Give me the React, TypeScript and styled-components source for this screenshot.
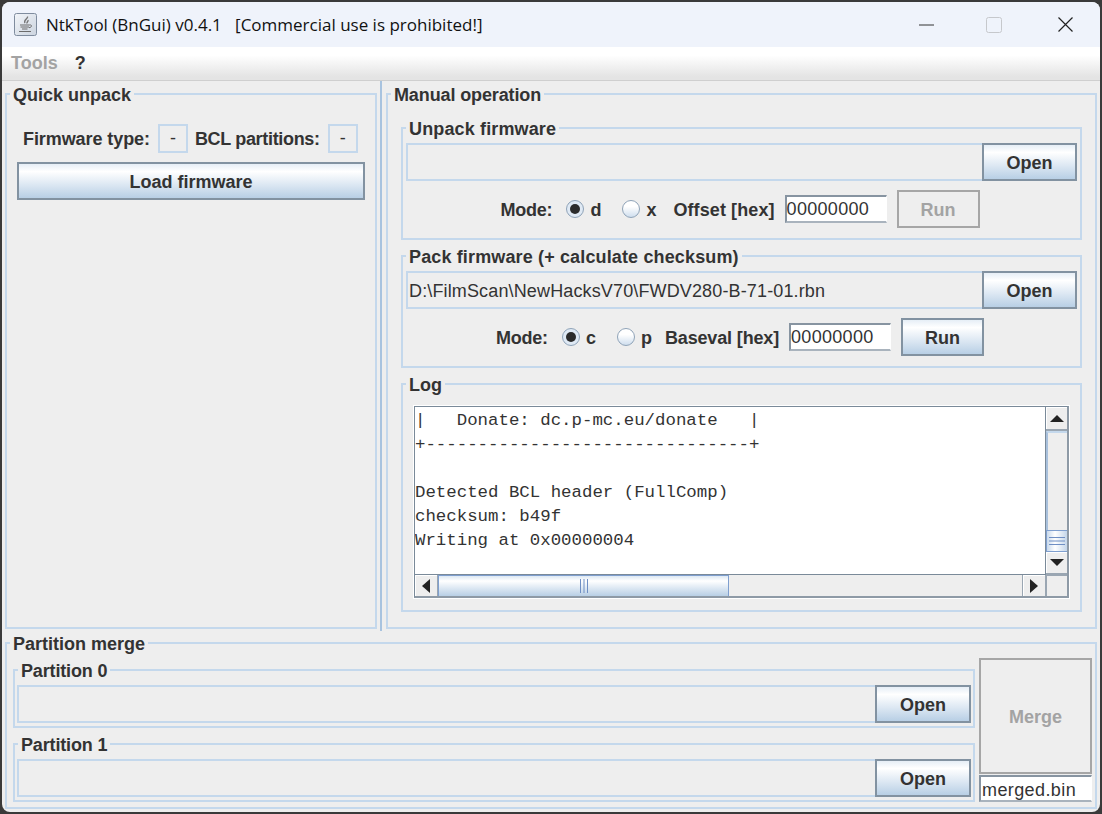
import React from 'react';
import styled, { createGlobalStyle } from 'styled-components';

const GlobalStyle = createGlobalStyle`
  html, body {
    margin: 0;
    height: 100%;
    background: #3a3a3a;
  }
  body {
    font-family: "Liberation Sans", Arial, sans-serif;
    overflow: hidden;
  }
  * {
    box-sizing: border-box;
  }
`;

const Window = styled.div`
  width: 1098px;
  height: 810px;
  margin: 2px;
  border-radius: 8px;
  overflow: hidden;
  background: #eeeeee;
  color: #333333;
  font-size: 18px;
`;

const TitleBar = styled.div`
  display: flex;
  align-items: center;
  height: 45px;
  padding-left: 12px;
  background: #eff3fb;
`;

const TitleText = styled.div`
  margin-left: 9px;
  font-family: "Open Sans", sans-serif;
  font-size: 17px;
  color: #111111;
  white-space: pre;
  flex: 1;
`;

const WindowControl = styled.div<{ $width: number }>`
  display: flex;
  align-items: center;
  justify-content: center;
  width: ${({ $width }) => $width}px;
  height: 45px;
`;

const MenuBar = styled.div`
  display: flex;
  align-items: center;
  height: 34px;
  padding: 0 0 1px 9px;
  gap: 17px;
  font-weight: 700;
  background: linear-gradient(#ffffff 0%, #ffffff 25%, #e4e4e4 90%);
  border-bottom: 1px solid #cfcfcf;
`;

const MenuItem = styled.span<{ $disabled?: boolean }>`
  color: ${({ $disabled }) => ($disabled ? '#a3a3a3' : '#333333')};
`;

const Body = styled.div`
  display: flex;
  height: 550px;
`;

const Group = styled.fieldset`
  display: flex;
  flex-direction: column;
  min-width: 0;
  margin: 0;
  padding: 0;
  border: 2px solid #c4d8ec;
`;

/* $inset is the left padding of the group, the legend starts from it */
const GroupTitle = styled.legend<{ $inset: number; $spacing?: number }>`
  margin-left: ${({ $inset }) => 3 - $inset}px;
  padding: 0 3px;
  height: 20px;
  line-height: 22px;
  font-weight: 700;
  letter-spacing: ${({ $spacing }) => $spacing ?? 0}px;
  white-space: nowrap;
`;

const QuickGroup = styled(Group)`
  width: 372px;
  height: 545px;
  margin: 3px 0 0 3px;
  padding: 20px 10px 0;
`;

const Divider = styled.div`
  width: 2px;
  margin: 0 4px 0 3px;
  background: #a8c3df;
`;

const ManualGroup = styled(Group)`
  width: 711px;
  height: 545px;
  margin-top: 3px;
  padding: 14px 13px 0;
  gap: 6px;
`;

const InnerGroup = styled(Group)<{ $height: number }>`
  height: ${({ $height }) => $height}px;
  flex: none;
  padding: 5px 3px 0;
`;

const Label = styled.span<{ $spacing?: number }>`
  padding-top: 2px;
  letter-spacing: ${({ $spacing }) => $spacing ?? 0}px;
  white-space: nowrap;
`;

const ModeLabel = styled(Label)`
  margin-right: 4px;
  letter-spacing: -0.2px;
`;

const InfoRow = styled.div`
  display: flex;
  align-items: center;
  height: 29px;
  padding-left: 6px;
  font-weight: 700;
`;

const InfoValue = styled.div`
  display: flex;
  flex: none;
  align-items: center;
  justify-content: center;
  width: 30px;
  height: 29px;
  margin: 0 7px 0 8px;
  border: 2px solid #c4d8ec;
  font-weight: 400;
`;

const Button = styled.button<{ $width?: number; $height?: number }>`
  flex: none;
  width: ${({ $width }) => ($width ? `${$width}px` : '100%')};
  height: ${({ $height }) => $height ?? 38}px;
  padding: 2px 0 0;
  border: 2px solid #8292a1;
  border-radius: 0;
  background: linear-gradient(#e6eef6 0%, #ffffff 22%, #dde8f3 60%, #b8cfe5 100%);
  font: 700 18px "Liberation Sans", Arial, sans-serif;
  color: #333333;

  &:disabled {
    background: #eeeeee;
    border-color: #a6a6a6;
    color: #a3a3a3;
  }
`;

const LoadButton = styled(Button)`
  margin-top: 9px;
`;

const FileRow = styled.div`
  display: flex;
  flex: none;
  height: 38px;
`;

const FileField = styled.div`
  flex: 1;
  min-width: 0;
  padding-left: 1px;
  border: 2px solid #c4d8ec;
  border-right: 0;
  line-height: 36px;
  letter-spacing: 0.14px;
  white-space: nowrap;
`;

const ModeRow = styled.div`
  display: flex;
  align-items: center;
  justify-content: center;
  gap: 10px;
  height: 38px;
  margin-top: 9px;
  padding-right: 3px;
  font-weight: 700;
`;

const RadioGroup = styled.div<{ $after: number }>`
  display: flex;
  gap: 21px;
  margin-right: ${({ $after }) => $after}px;
`;

const RadioOption = styled.label`
  display: flex;
  align-items: center;
  gap: 6px;
`;

const RadioDot = styled.span<{ $checked?: boolean }>`
  display: flex;
  align-items: center;
  justify-content: center;
  width: 18px;
  height: 18px;
  border: 1px solid #8fa3b8;
  border-radius: 50%;
  background: ${({ $checked }) =>
    $checked ? '#dfe9f4' : 'linear-gradient(#ffffff 35%, #cfdeee 100%)'};

  &::after {
    content: '';
    display: ${({ $checked }) => ($checked ? 'block' : 'none')};
    width: 10px;
    height: 10px;
    border-radius: 50%;
    background: #2b2b2b;
  }
`;

const HexInput = styled.div<{ $width: number; $height: number }>`
  flex: none;
  width: ${({ $width }) => $width}px;
  height: ${({ $height }) => $height}px;
  background: #ffffff;
  border: 1px solid #ffffff;
  border-top: 2px solid #8794a1;
  border-left: 2px solid #8794a1;
  border-bottom: 2px solid #a9b3bd;
  line-height: 24px;
  font-weight: 400;
  letter-spacing: 0.3px;
`;

const LogPane = styled.div`
  display: grid;
  grid-template-columns: 631px 21px;
  grid-template-rows: 168px 21px;
  width: 655px;
  height: 192px;
  margin: 7px 0 0 8px;
  background: #eeeeee;
  border-top: 1px solid #7a8a99;
  border-left: 1px solid #7a8a99;
  border-right: 2px solid #8e9aa6;
  border-bottom: 2px solid #8e9aa6;
  outline: 1px solid #ffffff;
`;

const LogText = styled.pre`
  margin: 0;
  padding-top: 2px;
  overflow: hidden;
  background: #ffffff;
  border-right: 1px solid #7a8a99;
  border-bottom: 1px solid #7a8a99;
  font-family: "Liberation Mono", "Courier New", monospace;
  font-size: 17.4px;
  line-height: 24px;
  color: #333333;
`;

const VerticalBar = styled.div`
  display: flex;
  flex-direction: column;
`;

const HorizontalBar = styled.div`
  display: flex;
`;

const Corner = styled.div`
  background: #eeeeee;
  border-top: 1px solid #9aa6b2;
  border-left: 1px solid #9aa6b2;
`;

const VerticalArrow = styled.div<{ $up?: boolean }>`
  display: flex;
  align-items: center;
  justify-content: center;
  flex: none;
  height: ${({ $up }) => ($up ? 24 : 23)}px;
  background: #eeeeee;
  box-shadow: inset 1px 1px 0 #ffffff;
  border-bottom: 2px solid #9aa6b2;
`;

const HorizontalArrow = styled.div<{ $left?: boolean }>`
  display: flex;
  align-items: center;
  justify-content: center;
  flex: none;
  width: ${({ $left }) => ($left ? 23 : 24)}px;
  background: #eeeeee;
  box-shadow: inset 1px 1px 0 #ffffff;
  border-left: ${({ $left }) => ($left ? '0' : '1px solid #9aa6b2')};
  border-right: 1px solid #9aa6b2;
`;

const VerticalTrack = styled.div`
  flex: 1;
  background: #eeeeee;
  border-left: 2px solid #a8c0dc;
  border-top: 2px solid #c4d8ec;
`;

const HorizontalTrack = styled.div`
  flex: 1;
  background: #eeeeee;
`;

const VerticalThumb = styled.div`
  display: flex;
  align-items: center;
  justify-content: center;
  flex: none;
  height: 22px;
  border: 1.5px solid #7f9fcf;
  border-right: 0;
  background: linear-gradient(90deg, #c8d9ec, #ffffff 40%, #c4d6ea);
`;

const HorizontalThumb = styled.div`
  display: flex;
  align-items: center;
  justify-content: center;
  flex: none;
  width: 291px;
  border: 1.5px solid #7f9fcf;
  border-bottom: 0;
  background: linear-gradient(#dde8f3 0%, #ffffff 25%, #dde8f3 60%, #b8cfe5 100%);
`;

const MergeGroup = styled(Group)`
  width: 1092px;
  height: 176px;
  margin: 2px 0 0 3px;
`;

const MergeBody = styled.div`
  display: flex;
  gap: 4px;
  padding: 0 3px 0 6px;
`;

const PartitionStack = styled.div`
  display: flex;
  flex-direction: column;
  gap: 6px;
  width: 962px;
  padding-top: 7px;
`;

const MergeColumn = styled.div`
  display: flex;
  flex-direction: column;
  gap: 1px;
  width: 113px;
  padding-top: 5px;
`;

const PartitionGroup = styled(Group)`
  height: 68px;
  flex: none;
  padding: 5px 2px 0;
`;

const NameInput = styled(HexInput)`
  width: 100%;
  padding-left: 1px;
  line-height: 26px;
  letter-spacing: 0.4px;
`;

const JavaIcon = () => (
  <svg width="23" height="23" viewBox="0 0 23 23">
    <defs>
      <linearGradient id="javaBg" x1="0" y1="0" x2="1" y2="1">
        <stop offset="0" stopColor="#f2f5f9" />
        <stop offset="1" stopColor="#ccd4df" />
      </linearGradient>
    </defs>
    <rect x="0.5" y="0.5" width="22" height="22" rx="2" fill="url(#javaBg)" stroke="#7f8c9e" />
    <path d="M13.500 3.500c1 2-4.500 3.500-2.500 6.500M14 7c.5 1.500-1.500 2-1 3.500" fill="none" stroke="#777777" strokeWidth="1.400" />
    <path d="M6 12h9.500M6.500 14h8.500M8 16h5.500" stroke="#6c6c6c" strokeWidth="1.200" />
    <path d="M15.500 12c3-.5 2.500 2.500-.5 2.700" fill="none" stroke="#6c6c6c" strokeWidth="1" />
    <path d="M5 18.500h12" stroke="#6c6c6c" strokeWidth="1.200" />
  </svg>
);

const Triangle = ({ points, width, height }: { points: string; width: number; height: number }) => (
  <svg width={width} height={height} viewBox={`0 0 ${width} ${height}`}>
    <polygon points={points} fill="#222222" />
  </svg>
);

const Radio = ({ label, checked }: { label: string; checked?: boolean }) => (
  <RadioOption>
    <RadioDot $checked={checked} />
    <Label>{label}</Label>
  </RadioOption>
);

const logText = `|   Donate: dc.p-mc.eu/donate   |
+-------------------------------+

Detected BCL header (FullComp)
checksum: b49f
Writing at 0x00000004`;

const App = () => (
  <>
    <GlobalStyle />
    <Window>
      <TitleBar>
        <JavaIcon />
        <TitleText>NtkTool (BnGui) v0.4.1   [Commercial use is prohibited!]</TitleText>
        <WindowControl $width={62}>
          <svg width="15" height="2" viewBox="0 0 15 2">
            <path d="M0 1h15" stroke="#333333" strokeWidth="1" />
          </svg>
        </WindowControl>
        <WindowControl $width={74}>
          <svg width="16" height="16" viewBox="0 0 16 16">
            <rect x="0.500" y="0.500" width="15" height="15" rx="2" fill="none" stroke="#c6c8cc" />
          </svg>
        </WindowControl>
        <WindowControl $width={69}>
          <svg width="15" height="15" viewBox="0 0 15 15">
            <path d="M0.500 0.500l14 14M14.500 0.500l-14 14" stroke="#222222" strokeWidth="1.200" />
          </svg>
        </WindowControl>
      </TitleBar>
      <MenuBar>
        <MenuItem $disabled>Tools</MenuItem>
        <MenuItem>?</MenuItem>
      </MenuBar>
      <Body>
        <QuickGroup>
          <GroupTitle $inset={10}>Quick unpack</GroupTitle>
          <InfoRow>
            <Label $spacing={-0.08}>Firmware type:</Label>
            <InfoValue>-</InfoValue>
            <Label $spacing={-0.33}>BCL partitions:</Label>
            <InfoValue>-</InfoValue>
          </InfoRow>
          <LoadButton>Load firmware</LoadButton>
        </QuickGroup>
        <Divider />
        <ManualGroup>
          <GroupTitle $inset={13} $spacing={-0.12}>Manual operation</GroupTitle>
          <InnerGroup $height={122}>
            <GroupTitle $inset={3} $spacing={0.14}>Unpack firmware</GroupTitle>
            <FileRow>
              <FileField />
              <Button $width={95}>Open</Button>
            </FileRow>
            <ModeRow>
              <ModeLabel>Mode:</ModeLabel>
              <RadioGroup $after={7}>
                <Radio label="d" checked />
                <Radio label="x" />
              </RadioGroup>
              <Label $spacing={0.1}>Offset [hex]</Label>
              <HexInput $width={102} $height={28}>00000000</HexInput>
              <Button $width={83} disabled>Run</Button>
            </ModeRow>
          </InnerGroup>
          <InnerGroup $height={122}>
            <GroupTitle $inset={3} $spacing={0.14}>Pack firmware (+ calculate checksum)</GroupTitle>
            <FileRow>
              <FileField>D:\FilmScan\NewHacksV70\FWDV280-B-71-01.rbn</FileField>
              <Button $width={95}>Open</Button>
            </FileRow>
            <ModeRow>
              <ModeLabel>Mode:</ModeLabel>
              <RadioGroup $after={3}>
                <Radio label="c" checked />
                <Radio label="p" />
              </RadioGroup>
              <Label $spacing={-0.15}>Baseval [hex]</Label>
              <HexInput $width={102} $height={28}>00000000</HexInput>
              <Button $width={83}>Run</Button>
            </ModeRow>
          </InnerGroup>
          <InnerGroup $height={238}>
            <GroupTitle $inset={3}>Log</GroupTitle>
            <LogPane>
              <LogText>{logText}</LogText>
              <VerticalBar>
                <VerticalArrow $up>
                  <Triangle width={14} height={7} points="7,0 14,7 0,7" />
                </VerticalArrow>
                <VerticalTrack />
                <VerticalThumb>
                  <svg width="16" height="10" viewBox="0 0 16 10">
                    <path d="M0 1.500h16M0 5h16M0 8.500h16" stroke="#6f8fc4" strokeWidth="1" />
                  </svg>
                </VerticalThumb>
                <VerticalArrow>
                  <Triangle width={14} height={7} points="0,0 14,0 7,7" />
                </VerticalArrow>
              </VerticalBar>
              <HorizontalBar>
                <HorizontalArrow $left>
                  <Triangle width={8} height={14} points="8,0 8,14 0,7" />
                </HorizontalArrow>
                <HorizontalThumb>
                  <svg width="10" height="14" viewBox="0 0 10 14">
                    <path d="M1.500 0v14M5 0v14M8.500 0v14" stroke="#6f8fc4" strokeWidth="1" />
                  </svg>
                </HorizontalThumb>
                <HorizontalTrack />
                <HorizontalArrow>
                  <Triangle width={8} height={14} points="0,0 8,7 0,14" />
                </HorizontalArrow>
              </HorizontalBar>
              <Corner />
            </LogPane>
          </InnerGroup>
        </ManualGroup>
      </Body>
      <MergeGroup>
        <GroupTitle $inset={0}>Partition merge</GroupTitle>
        <MergeBody>
          <PartitionStack>
            <PartitionGroup>
              <GroupTitle $inset={2} $spacing={-0.15}>Partition 0</GroupTitle>
              <FileRow>
                <FileField />
                <Button $width={96}>Open</Button>
              </FileRow>
            </PartitionGroup>
            <PartitionGroup>
              <GroupTitle $inset={2} $spacing={-0.15}>Partition 1</GroupTitle>
              <FileRow>
                <FileField />
                <Button $width={96}>Open</Button>
              </FileRow>
            </PartitionGroup>
          </PartitionStack>
          <MergeColumn>
            <Button $height={116} disabled>Merge</Button>
            <NameInput $width={113} $height={27}>merged.bin</NameInput>
          </MergeColumn>
        </MergeBody>
      </MergeGroup>
    </Window>
  </>
);

export default App;
